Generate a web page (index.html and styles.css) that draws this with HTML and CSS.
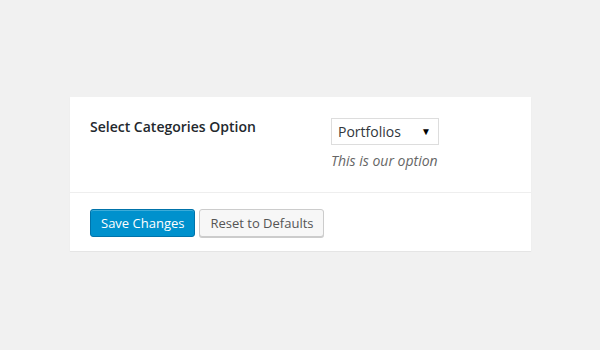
FILE: index.html
```html
<!DOCTYPE html>
<html>
<head>
<meta charset="utf-8">
<link rel="stylesheet" href="styles.css">
</head>
<body>
<div class="card">
  <div class="form-row">
    <div class="label">Select Categories Option</div>
    <div class="field">
      <div class="select"><span>Portfolios</span><span class="arrow">&#9660;</span></div>
      <div class="desc">This is our option</div>
    </div>
  </div>
  <div class="actions">
    <button class="btn primary">Save Changes</button>
    <button class="btn secondary">Reset to Defaults</button>
  </div>
</div>
</body>
</html>
```
FILE: styles.css
```css
html, body {
  margin: 0;
  background: #f1f1f1;
}
body {
  padding: 97px 69px 0 70px;
  font-family: "Open Sans", "Noto Sans", sans-serif;
  color: #23282d;
}
.card {
  width: 461px;
  background: #fff;
  box-shadow: 0 1px 1px rgba(0,0,0,0.06);
  border-bottom: 1px solid #e5e5e5;
}
.form-row {
  display: flex;
  padding: 21px 20px 19px 20px;
  border-bottom: 1px solid #eee;
}
.label {
  width: 241px;
  font-size: 14px;
  font-weight: 600;
  line-height: 18px;
  color: #23282d;
}
.field {
  display: flex;
  flex-direction: column;
}
.select {
  box-sizing: border-box;
  width: 108px;
  height: 27px;
  border: 1px solid #ddd;
  display: flex;
  align-items: center;
  justify-content: space-between;
  padding: 0 7px 0 6px;
  font-size: 14px;
  color: #32373c;
}
.arrow {
  font-size: 10px;
  color: #000;
  margin-top: -2px;
}
.desc {
  margin-top: 4px;
  font-size: 14px;
  font-style: italic;
  color: #666;
  line-height: 24px;
}
.actions {
  display: flex;
  gap: 4px;
  padding: 16px 20px 14px 20px;
}
.btn {
  box-sizing: border-box;
  height: 28px;
  padding: 0 10px;
  font-family: "Open Sans", "Noto Sans", sans-serif;
  font-size: 13px;
  border-radius: 3px;
  line-height: 26px;
  white-space: nowrap;
  cursor: pointer;
}
.primary {
  background: #0091cd;
  border: 1px solid #0073aa;
  color: #fff;
  box-shadow: inset 0 1px 0 rgba(120,200,230,0.5);
}
.secondary {
  padding: 0 9px 0 10px;
  background: #f7f7f7;
  border: 1px solid #ccc;
  color: #555;
  box-shadow: 0 1px 0 #ccc;
}
```
